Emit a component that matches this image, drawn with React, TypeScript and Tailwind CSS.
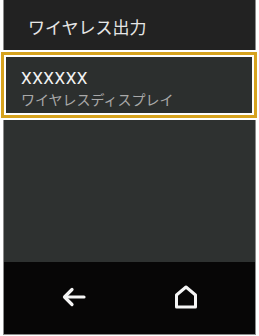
import React from "react";

export default function App() {
  return (
    <div className="w-[259px] h-[336px] bg-white overflow-hidden">
      <div className="ml-[3px] w-[253px] h-[335px] border-x border-b border-[#8c8c8c] flex flex-col">
        <div
          className="h-[50px] bg-[#222222] flex items-center pl-[24px] pt-[4px] text-[17px] text-[#e6e6e6]"
          style={{ fontFamily: '"Noto Sans CJK JP", sans-serif' }}
        >
          ワイヤレス出力
        </div>
        <div className="h-[2px] -mx-[1px] bg-white" />
        <div className="-ml-[3px] w-[256px] h-[66px] border-[3px] border-[#d6a21e] bg-white p-[2px]">
          <div className="w-full h-full bg-[#2c2f2e] flex flex-col justify-center pl-[15px] pt-[6px]">
            <div
              className="text-[17px] leading-[21px] tracking-[0.5px] text-[#f2f2f2]"
              style={{ fontFamily: 'Roboto, "Noto Sans CJK JP", sans-serif' }}
            >
              XXXXXX
            </div>
            <div
              className="text-[14px] leading-[20px] text-[#a9a9a9]"
              style={{ fontFamily: '"Noto Sans CJK JP", sans-serif' }}
            >
              ワイヤレスディスプレイ
            </div>
          </div>
        </div>
        <div className="h-[2px] -mx-[1px] bg-white" />
        <div className="h-[142px] bg-[#2e3130]" />
        <div className="flex-1 bg-[#070606] flex items-center pl-[58px] gap-[88px] pb-[2px]">
          <svg width="24" height="24" viewBox="0 0 24 24" fill="none" stroke="#f5f5f5" strokeWidth="3.2" strokeLinecap="round" strokeLinejoin="round">
            <path d="M22 12H3.5" />
            <path d="M10 4.5L2.5 12L10 19.5" />
          </svg>
          <svg width="24" height="24" viewBox="0 0 24 24" fill="none" stroke="#f5f5f5" strokeWidth="3" strokeLinecap="round" strokeLinejoin="round">
            <path d="M2.5 10L12 2L21.5 10V22H2.5Z" />
          </svg>
        </div>
      </div>
    </div>
  );
}
